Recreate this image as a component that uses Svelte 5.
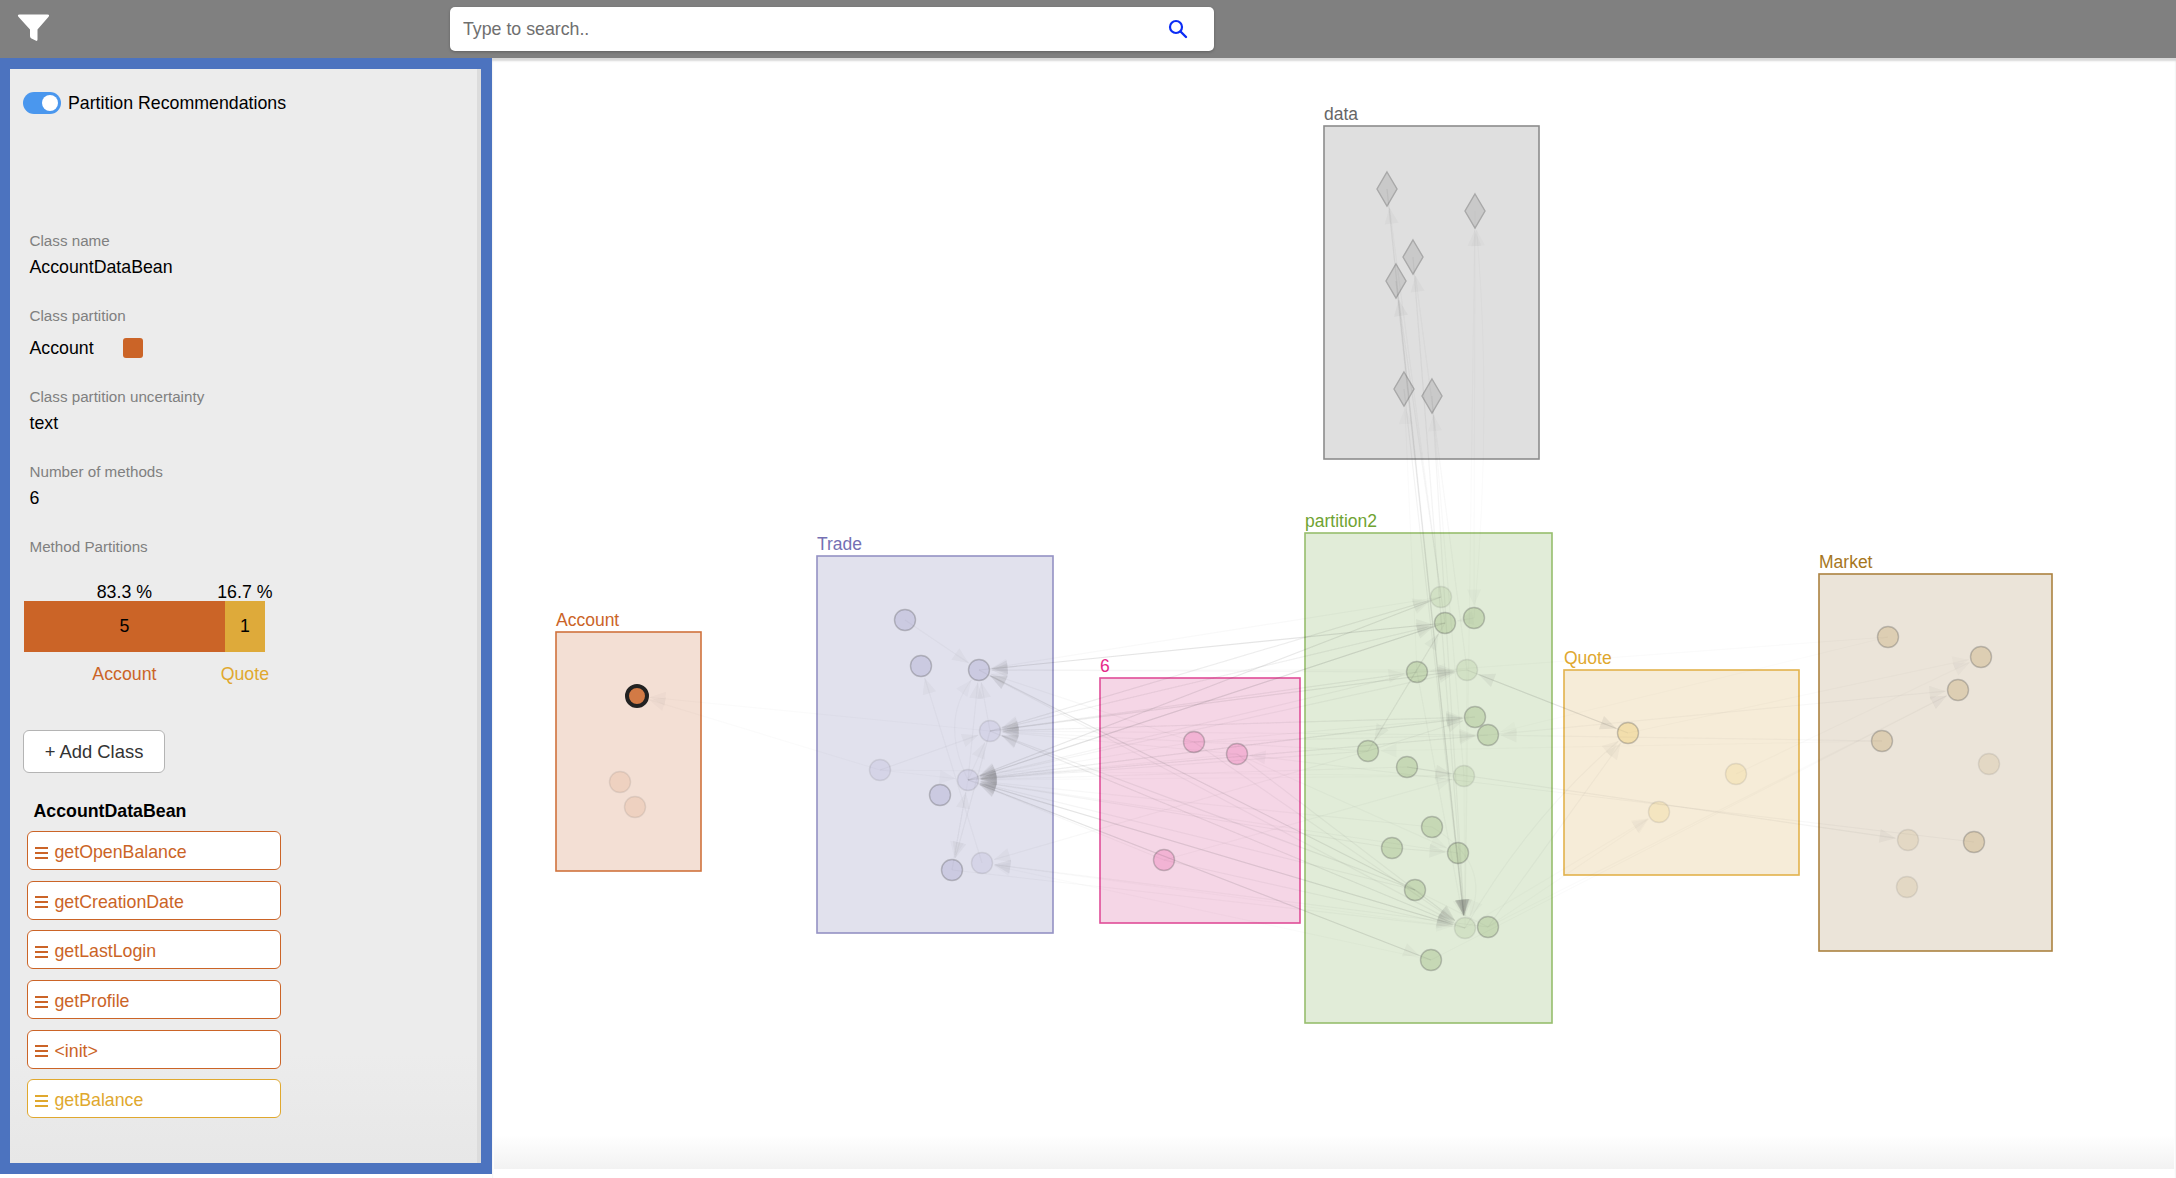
<script lang="ts">
  type Edge = [string, string, number, number?];

  const partitions = [
    { name: "data", cls: "data", x: 1324, y: 126, w: 215, h: 333 },
    { name: "Account", cls: "account", x: 556, y: 632, w: 145, h: 239 },
    { name: "Trade", cls: "trade", x: 817, y: 556, w: 236, h: 377 },
    { name: "6", cls: "six", x: 1100, y: 678, w: 200, h: 245 },
    { name: "partition2", cls: "part2", x: 1305, y: 533, w: 247, h: 490 },
    { name: "Quote", cls: "quote", x: 1564, y: 670, w: 235, h: 205 },
    { name: "Market", cls: "market", x: 1819, y: 574, w: 233, h: 377 },
  ];

  const nodes: Record<string, { x: number; y: number; cls: string; faded?: boolean }> = {
    a1: { x: 637, y: 696, cls: "account" },
    a2: { x: 620, y: 782, cls: "account", faded: true },
    a3: { x: 635, y: 807, cls: "account", faded: true },
    t1: { x: 905, y: 620, cls: "trade" },
    t2: { x: 921, y: 666, cls: "trade" },
    t3: { x: 979, y: 670, cls: "trade" },
    t4: { x: 990, y: 731, cls: "trade", faded: true },
    t5: { x: 880, y: 770, cls: "trade", faded: true },
    t6: { x: 968, y: 780, cls: "trade", faded: true },
    t7: { x: 940, y: 795, cls: "trade" },
    t8: { x: 982, y: 863, cls: "trade", faded: true },
    t9: { x: 952, y: 870, cls: "trade" },
    s1: { x: 1194, y: 742, cls: "six" },
    s2: { x: 1237, y: 754, cls: "six" },
    s3: { x: 1164, y: 860, cls: "six" },
    p1: { x: 1441, y: 597, cls: "part2", faded: true },
    p2: { x: 1445, y: 623, cls: "part2" },
    p3: { x: 1474, y: 618, cls: "part2" },
    p4: { x: 1417, y: 672, cls: "part2" },
    p5: { x: 1467, y: 670, cls: "part2", faded: true },
    p6: { x: 1475, y: 717, cls: "part2" },
    p7: { x: 1488, y: 735, cls: "part2" },
    p8: { x: 1368, y: 751, cls: "part2" },
    p9: { x: 1407, y: 767, cls: "part2" },
    p10: { x: 1464, y: 776, cls: "part2", faded: true },
    p11: { x: 1432, y: 827, cls: "part2" },
    p12: { x: 1392, y: 848, cls: "part2" },
    p13: { x: 1458, y: 853, cls: "part2" },
    p14: { x: 1415, y: 890, cls: "part2" },
    p15: { x: 1465, y: 928, cls: "part2", faded: true },
    p16: { x: 1488, y: 927, cls: "part2" },
    p17: { x: 1431, y: 960, cls: "part2" },
    q1: { x: 1628, y: 733, cls: "quote" },
    q2: { x: 1736, y: 774, cls: "quote", faded: true },
    q3: { x: 1659, y: 812, cls: "quote", faded: true },
    m1: { x: 1888, y: 637, cls: "market" },
    m2: { x: 1981, y: 657, cls: "market" },
    m3: { x: 1958, y: 690, cls: "market" },
    m4: { x: 1882, y: 741, cls: "market" },
    m5: { x: 1989, y: 764, cls: "market", faded: true },
    m6: { x: 1908, y: 840, cls: "market", faded: true },
    m7: { x: 1974, y: 842, cls: "market" },
    m8: { x: 1907, y: 887, cls: "market", faded: true },
  };

  const diamonds = [
    { id: "d1", x: 1387, y: 189 },
    { id: "d2", x: 1475, y: 211 },
    { id: "d3", x: 1413, y: 257 },
    { id: "d4", x: 1396, y: 281 },
    { id: "d5", x: 1404, y: 389 },
    { id: "d6", x: 1432, y: 396 },
  ];

  const edges: Edge[] = [
    ["t4", "a1", 0.05], ["t5", "a1", 0.05],
    ["p1", "t3", 0.06], ["p2", "t3", 0.16], ["p4", "t3", 0.07], ["p5", "t3", 0.06],
    ["s1", "t3", 0.08], ["p14", "t3", 0.16], ["p16", "t3", 0.08], ["t1", "t3", 0.08],
    ["t4", "t3", 0.07], ["t6", "t3", 0.07], ["t6", "t3", 0.06, 34],
    ["p2", "t4", 0.08], ["p1", "t4", 0.1], ["p4", "t4", 0.08], ["p5", "t4", 0.07],
    ["p6", "t4", 0.08], ["p7", "t4", 0.07], ["p8", "t4", 0.08], ["p14", "t4", 0.16],
    ["p15", "t4", 0.08], ["s2", "t4", 0.08], ["t5", "t4", 0.07], ["t6", "t4", 0.08],
    ["p2", "t6", 0.2], ["p1", "t6", 0.16], ["p4", "t6", 0.1], ["p6", "t6", 0.08],
    ["p7", "t6", 0.08], ["p8", "t6", 0.1], ["p9", "t6", 0.08], ["p10", "t6", 0.05],
    ["p11", "t6", 0.08], ["p12", "t6", 0.1], ["p13", "t6", 0.08], ["p14", "t6", 0.1],
    ["p15", "t6", 0.16], ["p17", "t6", 0.2], ["s1", "t6", 0.08], ["s2", "t6", 0.08],
    ["s3", "t6", 0.08], ["t5", "t6", 0.05], ["t9", "t6", 0.07],
    ["p8", "t8", 0.08], ["p15", "t8", 0.05], ["p17", "t8", 0.05], ["p16", "t8", 0.07],
    ["t8", "t2", 0.07], ["t4", "t9", 0.1], ["t6", "t9", 0.05], ["t9", "p15", 0.06],
    ["t6", "p1", 0.08], ["t4", "p1", 0.08],
    ["t3", "p2", 0.12], ["t6", "p2", 0.12], ["t4", "p2", 0.08], ["p8", "p2", 0.1], ["p3", "p2", 0.06],
    ["t4", "p4", 0.07], ["t4", "p5", 0.12], ["p4", "p5", 0.1], ["t6", "p5", 0.1], ["q1", "p5", 0.14],
    ["t6", "p6", 0.1], ["s1", "p6", 0.07], ["t4", "p6", 0.08], ["p8", "p6", 0.12],
    ["s1", "p7", 0.08], ["t6", "p7", 0.08], ["m4", "p7", 0.08], ["p2", "p8", 0.09],
    ["p9", "p10", 0.12], ["s3", "p10", 0.06], ["t5", "p10", 0.04],
    ["p12", "p13", 0.1], ["s2", "p13", 0.06],
    ["s1", "p15", 0.1], ["s2", "p15", 0.12], ["s3", "p15", 0.1], ["t3", "p15", 0.1],
    ["t4", "p15", 0.1], ["t6", "p15", 0.12], ["p13", "p15", 0.05], ["p14", "p15", 0.06],
    ["p4", "p15", 0.07], ["p5", "p15", 0.05], ["p10", "p15", 0.05], ["p11", "p15", 0.06, 46],
    ["d1", "p15", 0.16], ["d3", "p15", 0.12], ["d4", "p15", 0.16], ["d5", "p15", 0.12], ["d6", "p15", 0.1],
    ["t6", "p17", 0.08], ["d2", "p3", 0.05],
    ["p1", "d1", 0.08], ["p2", "d4", 0.1], ["p4", "d5", 0.04], ["p5", "d3", 0.08],
    ["p10", "d6", 0.06], ["p15", "d2", 0.05], ["p3", "d2", 0.04, -18],
    ["p5", "q1", 0.16], ["p15", "q1", 0.07, 22], ["p16", "q1", 0.07],
    ["p15", "q3", 0.05], ["p16", "q3", 0.04],
    ["p16", "m3", 0.05], ["p17", "m3", 0.04], ["p7", "m3", 0.08], ["q2", "m2", 0.05], ["q1", "m2", 0.04],
    ["m1", "p4", 0.04], ["m1", "p7", 0.03], ["m4", "p8", 0.05], ["p9", "m6", 0.1], ["m7", "s2", 0.07],
  ];

  const node_r = 10.5;

  const edge_shapes = edges.map(([from, to, strength, bend = 0], i) => {
    const a = nodes[from] ?? diamonds.find((d) => d.id === from)!;
    const b = nodes[to] ?? diamonds.find((d) => d.id === to)!;
    const mid_x = (a.x + b.x) / 2;
    const mid_y = (a.y + b.y) / 2;
    const len = Math.hypot(b.x - a.x, b.y - a.y);
    const cx = mid_x + ((b.y - a.y) / len) * bend;
    const cy = mid_y - ((b.x - a.x) / len) * bend;
    const dir_len = Math.hypot(b.x - cx, b.y - cy);
    const ux = (b.x - cx) / dir_len;
    const uy = (b.y - cy) / dir_len;
    const gap = to.startsWith("d") ? 19 : node_r + 2;
    const tip_x = b.x - ux * gap;
    const tip_y = b.y - uy * gap;
    const base_x = tip_x - ux * 16;
    const base_y = tip_y - uy * 16;
    return {
      id: i,
      strength,
      line: `M${a.x} ${a.y} Q${cx} ${cy} ${tip_x} ${tip_y}`,
      head: `${tip_x},${tip_y} ${base_x - uy * 7},${base_y + ux * 7} ${base_x + uy * 7},${base_y - ux * 7}`,
    };
  });

  const method_shares = [
    { name: "Account", cls: "account", count: 5, pct: 83.3 },
    { name: "Quote", cls: "quote", count: 1, pct: 16.7 },
  ];

  const methods = [
    { name: "getOpenBalance", cls: "account" },
    { name: "getCreationDate", cls: "account" },
    { name: "getLastLogin", cls: "account" },
    { name: "getProfile", cls: "account" },
    { name: "<init>", cls: "account" },
    { name: "getBalance", cls: "quote" },
  ];

  let search = $state("");
  let recommend = $state(true);
</script>

<div class="App">
  <header class="Header">
    <svg class="Header__filter" viewBox="17 13 33 29" width="33" height="29" aria-hidden="true">
      <path d="M19.5 14.5H47.5Q50 14.5 48.6 16.8L37.5 29.5V39.5Q37.5 41.5 35.6 40.6L31 38.2Q30 37.6 30 36V29.5L18.4 16.8Q17 14.5 19.5 14.5Z" fill="#fff" />
    </svg>
    <div class="Search">
      <input class="Search__input" placeholder="Type to search.." bind:value={search} />
      <svg class="Search__icon" viewBox="0 0 20 20" width="20" height="20" aria-hidden="true">
        <circle cx="8" cy="8" r="6" fill="none" stroke="#0b2cf5" stroke-width="2.2" />
        <line x1="12.5" y1="12.5" x2="18" y2="18" stroke="#0b2cf5" stroke-width="2.4" stroke-linecap="round" />
      </svg>
    </div>
  </header>

  <div class="Body">
    <aside class="Panel">
      <div class="Panel__inner">
        <label class="Toggle">
          <input class="Toggle__input" type="checkbox" bind:checked={recommend} />
          <span class="Toggle__track"><span class="Toggle__knob"></span></span>
          <span>Partition Recommendations</span>
        </label>

        <div class="Fields">
          <div class="Field__label">Class name</div>
          <div class="Field__value">AccountDataBean</div>

          <div class="Field__label">Class partition</div>
          <div class="Field__value Field__value--swatch">
            Account <span class="Swatch"></span>
          </div>

          <div class="Field__label">Class partition uncertainty</div>
          <div class="Field__value">text</div>

          <div class="Field__label">Number of methods</div>
          <div class="Field__value">6</div>

          <div class="Field__label">Method Partitions</div>
        </div>

        <div class="Shares">
          {#each method_shares as share}
            <div class="Share" style="width: {share.pct}%">
              <div class="Share__pct">{share.pct} %</div>
              <div class="Share__bar {share.cls}">{share.count}</div>
              <div class="Share__name {share.cls}">{share.name}</div>
            </div>
          {/each}
        </div>

        <button type="button" class="AddClass">+ Add Class</button>

        <div class="Methods__title">AccountDataBean</div>
        <div class="Methods">
          {#each methods as method}
            <div class="Method {method.cls}">
              <span class="Method__grip"><i></i><i></i><i></i></span>
              {method.name}
            </div>
          {/each}
        </div>
      </div>
    </aside>

    <main class="Graph">
      <svg class="Graph__canvas" viewBox="492 58 1684 1120" width="1684" height="1120">
        {#each partitions as p}
          <rect class="Box {p.cls}" x={p.x} y={p.y} width={p.w} height={p.h} />
          <text class="Box__label {p.cls}" x={p.x} y={p.y - 6.5}>{p.name}</text>
        {/each}

        {#each Object.entries(nodes) as [id, n] (id)}
          {#if id === "a1"}
            <circle class="Node--selected" cx={n.x} cy={n.y} r="10" />
          {:else}
            <circle class="Node {n.cls}" class:faded={n.faded} cx={n.x} cy={n.y} r={node_r} />
          {/if}
        {/each}

        {#each diamonds as d}
          <polygon class="Diamond" points="{d.x},{d.y - 17} {d.x + 10},{d.y} {d.x},{d.y + 17} {d.x - 10},{d.y}" />
        {/each}

        {#each edge_shapes as e (e.id)}
          <path class="Edge" d={e.line} stroke-opacity={e.strength * 0.5} />
          <polygon class="Arrow" points={e.head} fill-opacity={Math.min(e.strength * 0.55, 0.09)} />
        {/each}
      </svg>
    </main>
  </div>
</div>

<style>
  :global(body) {
    margin: 0;
    overflow: hidden;
    font-family: "Liberation Sans", Arial, sans-serif;
  }

  .App {
    display: flex;
    flex-direction: column;
    width: 2176px;
    height: 1178px;
    background-color: #fff;
  }

  .Header {
    display: flex;
    align-items: center;
    flex: 0 0 58px;
    padding-inline-start: 17px;
    background-color: #808080;
  }

  .Header__filter {
    margin-block-start: -3px;
  }

  .Search {
    display: flex;
    align-items: center;
    width: 764px;
    height: 44px;
    margin-inline-start: 400px;
    padding-inline: 13px 26px;
    box-sizing: border-box;
    border-radius: 5px;
    background-color: #fff;
    box-shadow: 0 1px 3px rgba(0, 0, 0, 0.25);
  }

  .Search__input {
    flex: 1;
    border: none;
    outline: none;
    padding: 0;
    font: 17.75px "Liberation Sans", Arial, sans-serif;
  }

  .Search__input::placeholder {
    color: #6f6f6f;
    opacity: 1;
  }

  .Body {
    display: flex;
    flex: 1;
    min-height: 0;
  }

  .Panel {
    flex: 0 0 492px;
    margin-block-end: 4px;
    padding: 11px 11px 11px 10px;
    box-sizing: border-box;
    background-color: #4c73bf;
  }

  .Panel__inner {
    height: 100%;
    padding: 23px 0 0 13px;
    box-sizing: border-box;
    border-inline-end: 4px solid #dcdcdc;
    background: linear-gradient(#ececec 90%, #e7e7e7);
    color: #000;
    font-size: 17.75px;
  }

  .Toggle {
    display: flex;
    align-items: center;
    gap: 7px;
    height: 22px;
  }

  .Toggle__input {
    display: none;
  }

  .Toggle__track {
    display: flex;
    align-items: center;
    justify-content: flex-end;
    width: 38px;
    height: 22px;
    padding-inline-end: 3px;
    box-sizing: border-box;
    border-radius: 11px;
    background-color: #4a97ee;
  }

  .Toggle__knob {
    width: 16px;
    height: 16px;
    border-radius: 50%;
    background-color: #fff;
  }

  .Fields {
    margin-block-start: 117px;
    margin-inline-start: 6.5px;
  }

  .Field__label {
    height: 20px;
    margin-block-start: 26px;
    color: #808080;
    font-size: 15.2px;
    line-height: 20px;
  }

  .Field__label:first-child {
    margin-block-start: 0;
  }

  .Field__value {
    height: 26px;
    margin-block-start: 3px;
    line-height: 26px;
  }

  .Field__value--swatch {
    display: flex;
    align-items: center;
    gap: 29px;
    margin-block-start: 9px;
  }

  .Swatch {
    width: 20px;
    height: 20px;
    border-radius: 3px;
    background-color: #cb6427;
  }

  .Shares {
    display: flex;
    width: 241px;
    margin-block-start: 26px;
    margin-inline-start: 1px;
    text-align: center;
  }

  .Share__pct,
  .Share__name {
    display: flex;
    justify-content: center;
    white-space: nowrap;
  }

  .Share__pct {
    height: 18px;
    line-height: 18px;
  }

  .Share__bar {
    height: 51px;
    line-height: 51px;
    color: #000;
  }

  .Share__bar.account {
    background-color: #cb6427;
  }

  .Share__bar.quote {
    background-color: #deaa3a;
  }

  .Share__name {
    margin-block-start: 11px;
    line-height: 22px;
  }

  .Share__name.account,
  .Method.account {
    color: #cb6427;
  }

  .Share__name.quote,
  .Method.quote {
    color: #e0a82e;
  }

  .AddClass {
    display: block;
    width: 142px;
    height: 43px;
    margin-block-start: 45px;
    border: 1.5px solid #b4b4b4;
    border-radius: 6px;
    background-color: #fff;
    color: #333;
    font: 18.4px "Liberation Sans", Arial, sans-serif;
  }

  .Methods__title {
    height: 22px;
    margin-block-start: 27px;
    margin-inline-start: 10.5px;
    font-weight: 700;
    line-height: 22px;
  }

  .Methods {
    display: flex;
    flex-direction: column;
    gap: 10.7px;
    width: 254px;
    margin-block-start: 9px;
    margin-inline-start: 4px;
  }

  .Method {
    display: flex;
    align-items: center;
    gap: 6.5px;
    height: 39px;
    padding-block-start: 4px;
    padding-inline-start: 7px;
    box-sizing: border-box;
    border: 1.5px solid currentColor;
    border-radius: 6px;
    background-color: #fff;
  }

  .Method__grip {
    display: flex;
    flex-direction: column;
    gap: 3px;
    width: 13px;
  }

  .Method__grip i {
    height: 2px;
    background-color: currentColor;
  }

  .Graph {
    flex: 1;
    box-shadow: inset 0 3px 2px #d8d8d8;
    background-image: linear-gradient(#fff, #f2f2f2);
    background-repeat: no-repeat;
    background-size: calc(100% - 4px) 34px;
    background-position: 2px calc(100% - 9px);
  }

  .Graph__canvas {
    display: block;
  }

  .Box {
    stroke-width: 1.6;
  }

  .Box__label {
    font-size: 17.5px;
  }

  .Box.data { fill: #dfdfdf; stroke: #8c8c8c; }
  .Box.account { fill: #f3dfd4; stroke: #d0723c; }
  .Box.trade { fill: #e1e1ed; stroke: #9492c4; }
  .Box.six { fill: #f5d6e6; stroke: #e04d98; }
  .Box.part2 { fill: #e1ecd8; stroke: #97be6d; }
  .Box.quote { fill: #f6ecd8; stroke: #e3b24c; }
  .Box.market { fill: #ebe4d9; stroke: #ac8240; }

  .Box__label.data { fill: #666; }
  .Box__label.account { fill: #cb6427; }
  .Box__label.trade { fill: #7570b3; }
  .Box__label.six { fill: #e7298a; }
  .Box__label.part2 { fill: #6fa332; }
  .Box__label.quote { fill: #e0a82e; }
  .Box__label.market { fill: #a6761d; }

  .Node {
    fill-opacity: 0.2;
    stroke: #555;
    stroke-opacity: 0.32;
    stroke-width: 1.4;
  }

  .Node.faded {
    fill-opacity: 0.11;
    stroke-opacity: 0.13;
  }

  .Node.account { fill: #cb6427; }
  .Node.trade { fill: #7570b3; }
  .Node.six { fill: #e7298a; }
  .Node.part2 { fill: #5c8a2c; }
  .Node.quote { fill: #e6ab02; }
  .Node.market { fill: #a6761d; }

  .Node--selected {
    fill: #d27a45;
    stroke: #222;
    stroke-width: 4;
  }

  .Diamond {
    fill: #c9c9c9;
    stroke: #a8a8a8;
    stroke-width: 1.4;
  }

  .Edge {
    fill: none;
    stroke: #444;
    stroke-width: 1.2;
  }

  .Arrow {
    fill: #555;
  }
</style>
